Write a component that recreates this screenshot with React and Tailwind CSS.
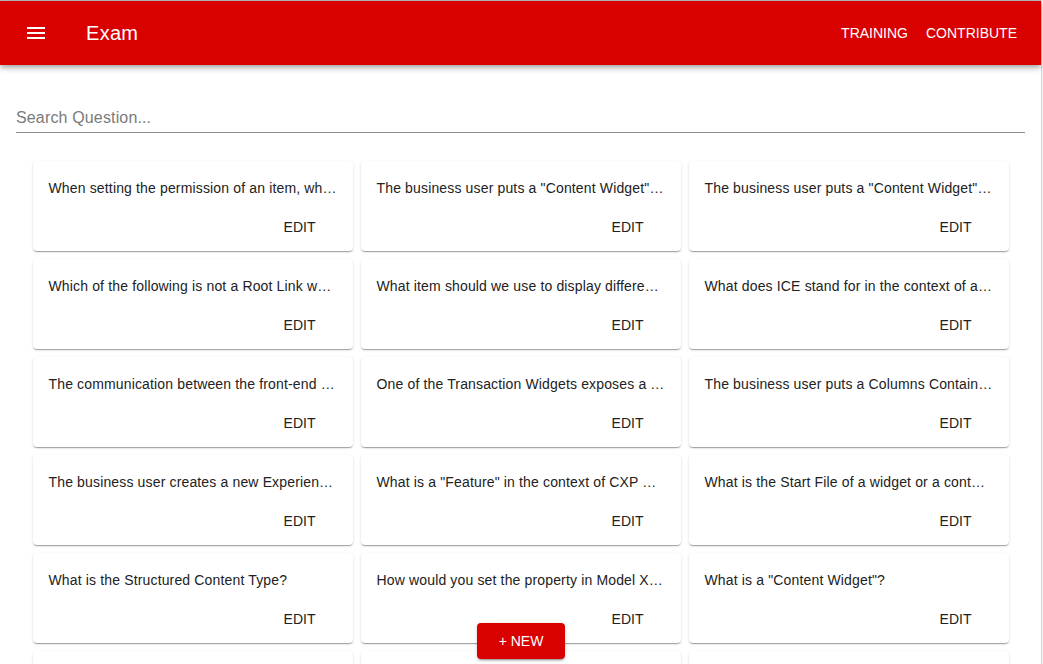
import React from "react";

const questions = [
  "When setting the permission of an item, which of the following is correct?",
  'The business user puts a "Content Widget" on a page and wants to edit it.',
  'The business user puts a "Content Widget" inside a container on the page.',
  "Which of the following is not a Root Link when creating a new link?",
  "What item should we use to display different content for each user?",
  "What does ICE stand for in the context of a content widget?",
  "The communication between the front-end and the back-end is done by?",
  "One of the Transaction Widgets exposes a preference for the account.",
  "The business user puts a Columns Container on the page.",
  "The business user creates a new Experience Manager page.",
  'What is a "Feature" in the context of CXP widgets?',
  "What is the Start File of a widget or a container?",
  "What is the Structured Content Type?",
  "How would you set the property in Model XML of the widget?",
  'What is a "Content Widget"?',
  "Which of the following statements is true about links?",
  "What is the purpose of the Portal Manager in CXP?",
  "How do you deploy a new widget to the portal server?",
];

function MenuIcon() {
  return (
    <svg width="24" height="24" viewBox="0 0 24 24" fill="white">
      <path d="M3 18h18v-2H3v2zm0-5h18v-2H3v2zm0-7v2h18V6H3z" />
    </svg>
  );
}

function Card({ text }) {
  return (
    <div className="h-[90px] bg-white rounded-[4px] shadow-[0_2px_1px_-1px_rgba(0,0,0,0.2),0_1px_1px_0_rgba(0,0,0,0.14),0_1px_3px_0_rgba(0,0,0,0.12)] flex flex-col">
      <div className="px-4 pt-[17px] h-[20px] box-content text-[14px] leading-[20px] tracking-[0.15px] text-[#222] truncate">
        {text}
      </div>
      <div className="flex justify-end pr-[37px] mt-[21px]">
        <span className="text-[14px] leading-[16px] text-[#222]">EDIT</span>
      </div>
    </div>
  );
}

export default function App() {
  return (
    <div className="w-[1043px] h-[664px] overflow-hidden flex font-['Liberation_Sans',Arial,sans-serif] bg-white">
      <div className="w-[1041px] h-full flex flex-col relative">
        <div className="h-px bg-[#bdbdbd] shrink-0" />
        <header className="h-16 shrink-0 bg-[#d90000] flex items-center relative z-10 shadow-[0_2px_4px_-1px_rgba(0,0,0,0.2),0_4px_5px_0_rgba(0,0,0,0.14),0_1px_10px_0_rgba(0,0,0,0.12)]">
          <div className="ml-6">
            <MenuIcon />
          </div>
          <div className="ml-[38px] text-white text-[20px] leading-[24px] tracking-[0.3px]">Exam</div>
          <div className="ml-auto mr-6 flex gap-[18px] text-white text-[14px] leading-[16px]">
            <span>TRAINING</span>
            <span>CONTRIBUTE</span>
          </div>
        </header>
        <div className="mx-4 mt-[43px] border-b border-[#8e8e8e] h-[25px] shrink-0 text-[16px] leading-[20px] tracking-[0.15px] text-[#7a7a7a]">
          Search Question...
        </div>
        <div className="mt-[28px] mx-auto w-[976px] grid grid-cols-3 gap-2">
          {questions.map((q, i) => (
            <Card key={i} text={q} />
          ))}
        </div>
        <button className="absolute left-[477px] top-[623px] w-[88px] h-9 rounded-[4px] bg-[#d90000] text-white text-[14px] shadow-[0_3px_1px_-2px_rgba(0,0,0,0.2),0_2px_2px_0_rgba(0,0,0,0.14),0_1px_5px_0_rgba(0,0,0,0.12)]">
          + NEW
        </button>
      </div>
      <div className="w-px h-full bg-[#d6d6d6]" />
      <div className="w-px h-full bg-[#f3f3f3]" />
    </div>
  );
}
